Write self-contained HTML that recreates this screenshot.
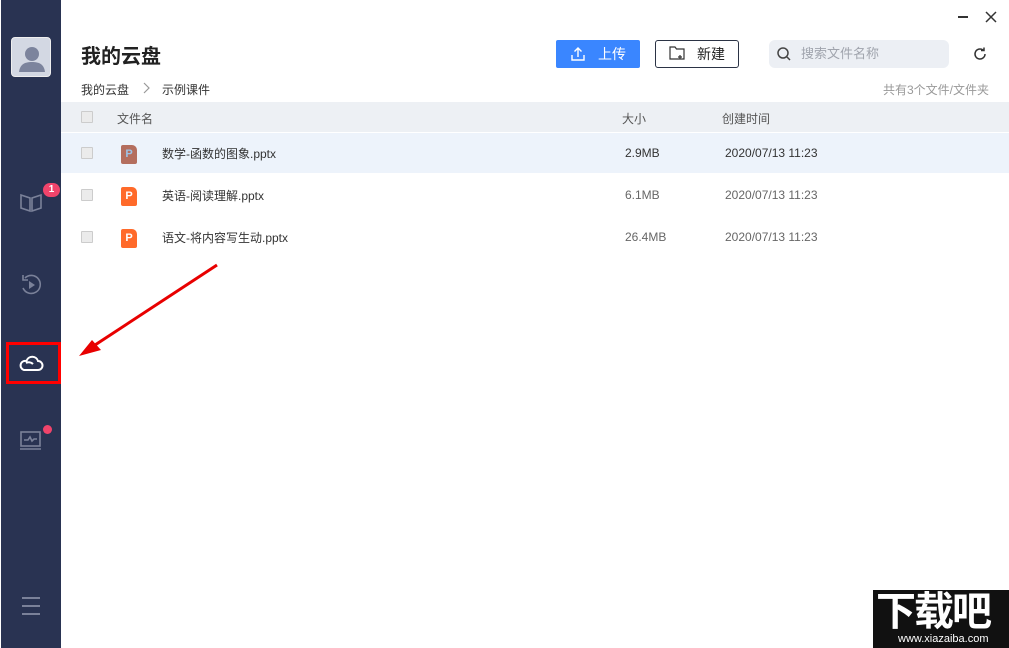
<!DOCTYPE html>
<html><head><meta charset="utf-8"><style>
*{margin:0;padding:0;box-sizing:border-box}
body{width:1009px;height:648px;overflow:hidden;background:#fff;position:relative;font-family:"Liberation Sans","Noto Sans CJK SC",sans-serif;color:#333}
.sb{position:absolute;left:1px;top:0;width:60px;height:648px;background:#293352}
.abs{position:absolute}
.t{font-size:12px;color:#333;position:absolute;white-space:nowrap}
.cb{position:absolute;left:81px;width:12px;height:12px;border:1px solid #ccc;background:#ebebeb;border-radius:1px}
.row{position:absolute;left:61px;right:0;height:40px}
.pi{position:absolute;left:121px;width:16px;height:19px;border-radius:2px 5px 2px 2px;background:#ff6a2a;color:#fff;font-size:11px;font-weight:bold;text-align:center;line-height:19px}
</style></head><body>
<div class="sb"></div>
<div class="abs" style="left:11px;top:37px;width:40px;height:40px;background:#d3d8e3;border-radius:4px;border:1px solid #eee;overflow:hidden">
<svg width="40" height="40"><circle cx="20" cy="16" r="7" fill="#7c849d"/><path d="M7 34c1-8 6-10 13-10s12 2 13 10z" fill="#7c849d"/></svg></div>
<svg class="abs" style="left:18px;top:190px" width="26" height="26" fill="none" stroke="#7a8199" stroke-width="1.6"><path d="M3 5l9 3v13l-9-3z M23 5l-9 3v13l9-3z"/></svg>
<div class="abs" style="left:43px;top:183px;width:17px;height:14px;border-radius:7px;background:#f0446b;color:#fff;font-size:10px;font-weight:bold;text-align:center;line-height:14px">1</div>
<svg class="abs" style="left:18px;top:272px" width="26" height="26" fill="none" stroke="#7a8199" stroke-width="1.6"><path d="M7 6A9 9 0 1 1 5 16"/><path d="M5 3v5h5"/><path d="M11 9l6 4-6 4z" fill="#7a8199" stroke="none"/></svg>
<div class="abs" style="left:6px;top:342px;width:55px;height:42px;border:3px solid #f00"></div>
<svg class="abs" style="left:17px;top:352px" width="28" height="22" fill="none" stroke="#fff" stroke-width="2"><path d="M7 18h14a4.5 4.5 0 0 0 0-9 6 6 0 0 0-11.5 0 4.5 4.5 0 0 0-2.5 9z M9 11a6 6 0 0 1 7 1"/></svg>
<svg class="abs" style="left:18px;top:425px" width="30" height="30" fill="none" stroke="#7a8199" stroke-width="1.6"><rect x="3" y="7" width="19" height="14"/><path d="M2 24h21 M6 15h4l2-3 2 4 2-2h3"/></svg>
<div class="abs" style="left:43px;top:425px;width:9px;height:9px;border-radius:50%;background:#f0446b"></div>
<svg class="abs" style="left:20px;top:595px" width="22" height="22" stroke="#7a8199" stroke-width="2"><path d="M2 3h18M2 11h18M2 19h18"/></svg>

<div class="abs" style="left:958px;top:16px;width:10px;height:1.5px;background:#333"></div>
<svg class="abs" style="left:985px;top:11px" width="12" height="12" stroke="#333" stroke-width="1.5"><path d="M1 1l10 10M11 1L1 11"/></svg>

<div class="abs" style="left:81px;top:40px;font-size:20px;font-weight:bold;color:#222">我的云盘</div>
<div class="abs" style="left:556px;top:40px;width:84px;height:28px;background:#3a86ff;border-radius:2px;color:#fff;font-size:14px;line-height:28px;padding-left:42px">上传</div>
<svg class="abs" style="left:570px;top:46px" width="16" height="16" fill="none" stroke="#fff" stroke-width="1.4"><path d="M8 11V2M4.5 5.5L8 2l3.5 3.5M2 9v5h12V9"/></svg>
<div class="abs" style="left:655px;top:40px;width:84px;height:28px;border:1px solid #2b3345;border-radius:3px;font-size:14px;line-height:26px;padding-left:41px;color:#222">新建</div>
<svg class="abs" style="left:669px;top:46px" width="16" height="14" fill="none" stroke="#333" stroke-width="1.2"><path d="M1 1h5l1.5 2H15v10H1z M11 9v4M9 11h4"/></svg>
<div class="abs" style="left:769px;top:40px;width:180px;height:28px;background:#eceff4;border-radius:6px;font-size:13px;color:#a0a4ad;line-height:28px;padding-left:32px">搜索文件名称</div>
<svg class="abs" style="left:776px;top:46px" width="16" height="16" fill="none" stroke="#444" stroke-width="1.5"><circle cx="7" cy="7" r="5"/><path d="M11 11l3 3"/></svg>
<svg class="abs" style="left:972px;top:46px" width="16" height="16" fill="none" stroke="#333" stroke-width="1.5"><path d="M13 8a5 5 0 1 1-2-4M12 1.5v3h-3"/></svg>

<div class="t" style="left:81px;top:81px">我的云盘</div>
<svg class="abs" style="left:142px;top:82px" width="8" height="12" fill="none" stroke="#999" stroke-width="1.2"><path d="M2 1l5 5-5 5"/></svg>
<div class="t" style="left:162px;top:81px">示例课件</div>
<div class="t" style="left:883px;top:81px;color:#999">共有3个文件/文件夹</div>

<div class="abs" style="left:61px;top:102px;right:0;height:30px;background:#edf0f4"></div>
<div class="cb" style="top:111px"></div>
<div class="t" style="left:117px;top:110px;color:#555">文件名</div>
<div class="t" style="left:622px;top:110px;color:#555">大小</div>
<div class="t" style="left:722px;top:110px;color:#555">创建时间</div>

<div class="row" style="top:133px;background:#edf3fb"></div>
<div class="cb" style="top:147px"></div><div class="pi" style="top:145px;background:#b46e5e;color:#9ec3e6">P</div>
<div class="t" style="left:162px;top:145px">数学-函数的图象.pptx</div><div class="t" style="left:625px;top:146px">2.9MB</div><div class="t" style="left:725px;top:146px">2020/07/13 11:23</div>

<div class="cb" style="top:189px"></div><div class="pi" style="top:187px">P</div>
<div class="t" style="left:162px;top:187px">英语-阅读理解.pptx</div><div class="t" style="left:625px;top:188px;color:#666">6.1MB</div><div class="t" style="left:725px;top:188px;color:#666">2020/07/13 11:23</div>

<div class="cb" style="top:231px"></div><div class="pi" style="top:229px">P</div>
<div class="t" style="left:162px;top:229px">语文-将内容写生动.pptx</div><div class="t" style="left:625px;top:230px;color:#666">26.4MB</div><div class="t" style="left:725px;top:230px;color:#666">2020/07/13 11:23</div>

<svg class="abs" style="left:0;top:0" width="300" height="400"><path d="M217 265L95 345" stroke="#e80000" stroke-width="3"/><path d="M79 356l22-6-9-10z" fill="#e80000"/></svg>

<div class="abs" style="left:873px;top:590px;width:136px;height:58px;background:#111"></div>
<div class="abs" style="left:876px;top:588px;font-size:40px;font-weight:bold;color:#fff;letter-spacing:-2px;line-height:48px">下载吧</div>
<div class="abs" style="left:898px;top:633px;font-size:11px;color:#fff">www.xiazaiba.com</div>
</body></html>
